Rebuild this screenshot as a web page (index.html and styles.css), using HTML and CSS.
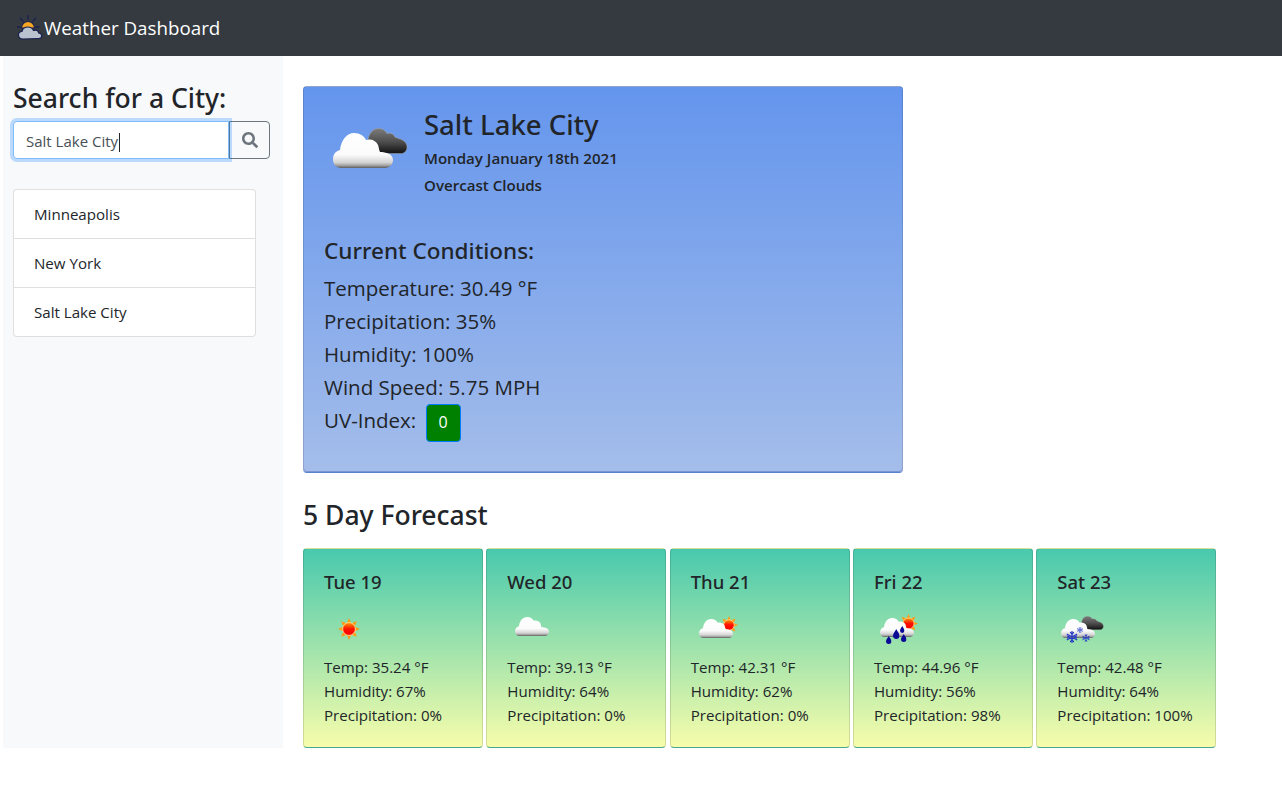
FILE: index.html
```html
<!DOCTYPE html>
<html lang="en">
<head>
    <meta charset="UTF-8">
    <title>Weather Dashboard</title>
    <link rel="stylesheet" href="styles.css">
</head>
<body>
    <svg class="defs" width="0" height="0">
        <defs>
            <linearGradient id="whiteCloud" x1="0" y1="0" x2="0" y2="1">
                <stop offset="0" stop-color="#ffffff"/>
                <stop offset="0.62" stop-color="#fbfbfb"/>
                <stop offset="0.84" stop-color="#d4d4d4"/>
                <stop offset="0.92" stop-color="#a8a8a8"/>
                <stop offset="1" stop-color="#5e5e5e"/>
            </linearGradient>
            <linearGradient id="darkCloud" x1="0" y1="0" x2="0" y2="1">
                <stop offset="0" stop-color="#7c7c7c"/>
                <stop offset="0.55" stop-color="#4c4c4c"/>
                <stop offset="1" stop-color="#111111"/>
            </linearGradient>
            <linearGradient id="sunBall" x1="0" y1="0" x2="0" y2="1">
                <stop offset="0" stop-color="#ff9a00"/>
                <stop offset="0.5" stop-color="#ff1000"/>
                <stop offset="1" stop-color="#f80000"/>
            </linearGradient>
            <symbol id="sun" viewBox="0 0 24 24">
                <path fill="#ff9c12" d="M12 0l2.600 6h-5.200zM12 24l-2.600-6h5.200zM0 12l6-2.600v5.200zM24 12l-6 2.600v-5.200zM3.500 3.500l6.100 2.300-3.800 3.800zM20.500 3.500l-2.300 6.100-3.800-3.800zM3.500 20.500l2.300-6.100 3.800 3.800zM20.500 20.500l-6.100-2.300 3.800-3.800z"/>
                <circle cx="12" cy="12" r="7" fill="url(#sunBall)" stroke="#ffe2a0" stroke-width="1"/>
            </symbol>
            <symbol id="cloudWhite" viewBox="0 0 60 35" preserveAspectRatio="none">
                <path fill="url(#whiteCloud)" d="M8 35C3 35 0 31 0 26.500 0 21 3 18 7 17 8 7 14 0 21 0c6 0 10 3 12 7 3-1 9-1 12 5 1 3 1 5 2 7 6 0 13 2 13 8 0 5-4 8-8 8z"/>
            </symbol>
            <symbol id="cloudDark" viewBox="0 0 42 26" preserveAspectRatio="none">
                <path fill="url(#darkCloud)" stroke="#a8a8a8" stroke-width="0.5" d="M6 25.500C2 25.500 0.500 22 0.500 18 0.500 8 4 0.500 12 0.500c4 0 7 2 8.500 5 3-1 7 0 8.500 4 1 0 2 0 3 1 5 1 9 4 9 8.500 0 4-3 6.500-6 6.500z"/>
            </symbol>
            <symbol id="drop" viewBox="0 0 10 14" preserveAspectRatio="none">
                <path fill="#0a0a96" d="M5 0c2 4 5 6 5 9.200a5 4.800 0 0 1-10 0C0 6 3 4 5 0z"/>
            </symbol>
            <symbol id="flake" viewBox="0 0 24 24">
                <g stroke="#2438c8" stroke-width="2.400" stroke-linecap="round" fill="none">
                    <path d="M12 1v22M2.500 6.500l19 11M2.500 17.500l19-11"/>
                    <path d="M9 3l3 3 3-3M9 21l3-3 3 3M3 10l4 2-4 2M21 10l-4 2 4 2"/>
                </g>
            </symbol>
        </defs>
    </svg>

    <header class="navbar">
        <svg class="brand-icon" viewBox="0 0 26 26">
            <path stroke="#1a2050" stroke-width="1.300" fill="none" d="M11 0v5M3 3l3.500 3.500M19 3l-3.500 3.500M0 12h3.500M18.500 12h4"/>
            <path fill="#f5a623" stroke="#1a2050" stroke-width="1.200" d="M4.500 13a6.500 6.500 0 0 1 13 0z"/>
            <path fill="#b8c3cf" stroke="#1a2050" stroke-width="1.200" d="M6 24c-3 0-4.500-2-4.500-4s1.500-3.500 3.500-3.500c.5-2.500 3-4.500 6-4.500 2.500 0 4.500 1.500 5.500 3.500.5-.3 1-.3 2-.3 2 0 3 1.300 3.200 2.800 1.800.2 3 1.500 3 3s-1.300 2.500-3 2.500z"/>
        </svg>
        <span class="brand-name">Weather Dashboard</span>
    </header>

    <div class="page">
        <aside class="sidebar">
            <h2 class="search-title">Search for a City:</h2>
            <form class="search-group">
                <div class="search-input">Salt Lake City<span class="caret"></span></div>
                <button class="search-btn" type="button" aria-label="Search">
                    <svg viewBox="0 0 512 512" width="16" height="16">
                        <path fill="#6c757d" d="M505 442.700L405.300 343c-4.500-4.500-10.600-7-17-7H372c27.600-35.300 44-79.700 44-128C416 93.100 322.900 0 208 0S0 93.100 0 208s93.100 208 208 208c48.300 0 92.700-16.400 128-44v16.300c0 6.400 2.500 12.500 7 17l99.700 99.700c9.400 9.400 24.600 9.400 33.900 0l28.300-28.300c9.400-9.400 9.400-24.600.1-34zM208 336c-70.700 0-128-57.200-128-128 0-70.700 57.200-128 128-128 70.700 0 128 57.200 128 128 0 70.700-57.200 128-128 128z"/>
                    </svg>
                </button>
            </form>
            <ul class="city-list">
                <li>Minneapolis</li>
                <li>New York</li>
                <li>Salt Lake City</li>
            </ul>
        </aside>

        <main class="content">
            <section class="current">
                <div class="current-head">
                    <svg class="current-icon" viewBox="0 0 80 50">
                        <use href="#cloudDark" x="39" y="8" width="41" height="26"/>
                        <use href="#cloudWhite" x="5" y="13" width="60" height="35"/>
                    </svg>
                    <div>
                        <h2 class="city-name">Salt Lake City</h2>
                        <div class="city-meta">Monday January 18th 2021</div>
                        <div class="city-meta">Overcast Clouds</div>
                    </div>
                </div>
                <h3 class="conditions-title">Current Conditions:</h3>
                <div class="condition">Temperature: 30.49 °F</div>
                <div class="condition">Precipitation: 35%</div>
                <div class="condition">Humidity: 100%</div>
                <div class="condition">Wind Speed: 5.75 MPH</div>
                <div class="condition">UV-Index: <span class="uv-badge">0</span></div>
            </section>

            <h2 class="forecast-title">5 Day Forecast</h2>
            <section class="forecast">
                <article class="day">
                    <h3 class="day-name">Tue 19</h3>
                    <svg class="day-icon" viewBox="0 0 50 34">
                        <use href="#sun" x="14" y="8" width="22" height="22"/>
                    </svg>
                    <div>Temp: 35.24 °F</div>
                    <div>Humidity: 67%</div>
                    <div>Precipitation: 0%</div>
                </article>
                <article class="day">
                    <h3 class="day-name">Wed 20</h3>
                    <svg class="day-icon" viewBox="0 0 50 34">
                        <use href="#cloudWhite" x="8" y="7" width="34" height="19"/>
                    </svg>
                    <div>Temp: 39.13 °F</div>
                    <div>Humidity: 64%</div>
                    <div>Precipitation: 0%</div>
                </article>
                <article class="day">
                    <h3 class="day-name">Thu 21</h3>
                    <svg class="day-icon" viewBox="0 0 50 34">
                        <use href="#sun" x="29" y="6" width="18" height="18"/>
                        <use href="#cloudWhite" x="8" y="9" width="34" height="19"/>
                    </svg>
                    <div>Temp: 42.31 °F</div>
                    <div>Humidity: 62%</div>
                    <div>Precipitation: 0%</div>
                </article>
                <article class="day">
                    <h3 class="day-name">Fri 22</h3>
                    <svg class="day-icon" viewBox="0 0 50 34">
                        <use href="#sun" x="25" y="4" width="19" height="19"/>
                        <use href="#cloudWhite" x="6" y="8" width="34" height="19"/>
                        <use href="#drop" x="12" y="26" width="5.500" height="8"/>
                        <use href="#drop" x="19" y="19" width="6.500" height="10"/>
                        <use href="#drop" x="26" y="16" width="4.500" height="7"/>
                        <use href="#drop" x="27" y="24" width="5.500" height="8"/>
                    </svg>
                    <div>Temp: 44.96 °F</div>
                    <div>Humidity: 56%</div>
                    <div>Precipitation: 98%</div>
                </article>
                <article class="day">
                    <h3 class="day-name">Sat 23</h3>
                    <svg class="day-icon" viewBox="0 0 50 34">
                        <use href="#cloudDark" x="24" y="6" width="23" height="14"/>
                        <use href="#cloudWhite" x="4" y="9" width="34" height="19"/>
                        <use href="#flake" x="9" y="21" width="12" height="12"/>
                        <use href="#flake" x="20" y="17" width="6" height="6"/>
                        <use href="#flake" x="25" y="24" width="8" height="8"/>
                    </svg>
                    <div>Temp: 42.48 °F</div>
                    <div>Humidity: 64%</div>
                    <div>Precipitation: 100%</div>
                </article>
            </section>
        </main>
    </div>
</body>
</html>
```

FILE: styles.css
```css
* {
    box-sizing: border-box;
}
body {
    font-family: "Open Sans", "Noto Sans", Arial, sans-serif;
    font-size: 16px;
    line-height: 24px;
    color: #212529;
    margin: 0;
    background-color: #fff;
}
h2, h3 {
    margin: 0;
    font-family: "Noto Sans", "Open Sans", Arial, sans-serif;
    font-weight: 500;
}
.defs {
    display: block;
    height: 0;
}
.navbar {
    height: 56px;
    background-color: #343a40;
    display: flex;
    align-items: center;
    padding-left: 17px;
}
.brand-icon {
    width: 26px;
    height: 26px;
    margin-right: 1px;
    flex-shrink: 0;
}
.brand-name {
    color: #fff;
    font-size: 18.750px;
}
.page {
    display: flex;
    padding-left: 3px;
}
.sidebar {
    width: 280px;
    height: 692px;
    background-color: #f8f9fa;
    padding: 25px 13px 0 10px;
}
.search-title {
    font-size: 26.500px;
    line-height: 34px;
    white-space: nowrap;
}
.search-group {
    display: flex;
    height: 38px;
    margin: 6px 0 30px;
}
.search-input {
    flex: 1;
    background: #fff;
    border: 1px solid #80bdff;
    border-radius: 4px 0 0 4px;
    box-shadow: 0 0 0 3px rgba(0, 123, 255, 0.25);
    padding: 7px 12px 5px;
    color: #495057;
    font-size: 15px;
    white-space: nowrap;
    position: relative;
}
.caret {
    display: inline-block;
    width: 1px;
    height: 19px;
    margin-left: 1px;
    background-color: #212529;
    vertical-align: -5px;
}
.search-btn {
    width: 41px;
    background: #f8f9fa;
    border: 1px solid #6c757d;
    border-radius: 0 4px 4px 0;
    padding: 0;
    display: flex;
    align-items: center;
    justify-content: center;
}
.city-list {
    list-style: none;
    margin: 0;
    padding: 0;
    width: 243px;
    background: #fff;
    border: 1px solid rgba(0, 0, 0, 0.125);
    border-radius: 4px;
    font-size: 15.100px;
}
.city-list li {
    height: 49px;
    padding: 12px 20px;
    border-bottom: 1px solid rgba(0, 0, 0, 0.125);
}
.city-list li:last-child {
    height: 48px;
    border-bottom: 0;
}
.content {
    padding: 30px 0 0 20px;
}
.current {
    width: 600px;
    height: 387px;
    padding: 18px 20px 0;
    border: 1px solid rgba(0, 0, 0, 0.125);
    border-radius: 4px;
    background: linear-gradient(#6495ed, #a4bdea);
    box-shadow: inset 0 -1px 0 rgba(60, 90, 180, 0.4);
}
.current-head {
    display: flex;
    height: 128px;
}
.current-icon {
    width: 80px;
    height: 50px;
    margin: 15px 16px 0 4px;
    flex-shrink: 0;
}
.city-name {
    font-size: 27.500px;
    line-height: 40px;
}
.city-meta {
    font-size: 15.100px;
    font-weight: 600;
    line-height: 27px;
}
.conditions-title {
    font-size: 22.500px;
    line-height: 36px;
    margin-bottom: 3px;
}
.condition {
    font-size: 20.500px;
    line-height: 33px;
}
.uv-badge {
    display: inline-block;
    width: 35px;
    height: 38px;
    margin: -8px 0 -8px 4px;
    line-height: 34px;
    text-align: center;
    font-size: 16px;
    color: #fff;
    background-color: #008000;
    border: 1px solid #007bff;
    border-radius: 4px;
}
.forecast-title {
    font-size: 26.500px;
    line-height: 34px;
    margin: 25px 0 16px;
}
.forecast {
    display: flex;
    gap: 3.330px;
}
.day {
    width: 180px;
    height: 200px;
    padding: 21px 20px 0;
    border: 1px solid rgba(0, 0, 0, 0.125);
    border-bottom-color: #46a88c;
    border-radius: 4px;
    background: linear-gradient(#48c9ad, #f7fdab);
    font-size: 15.100px;
    white-space: nowrap;
}
.day-name {
    font-size: 18.500px;
    line-height: 24px;
}
.day-icon {
    display: block;
    width: 50px;
    height: 34px;
    margin: 16px 0 11px;
}
```
